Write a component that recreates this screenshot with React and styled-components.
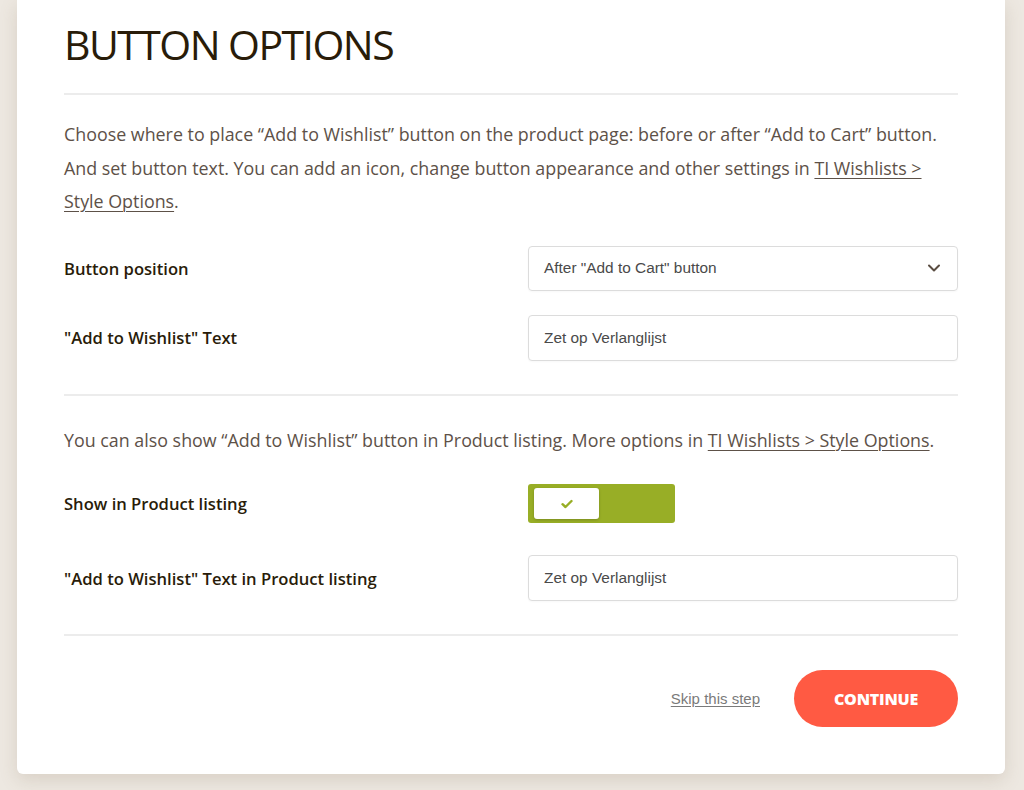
import React, { useState } from 'react';
import styled, { createGlobalStyle } from 'styled-components';

const GlobalStyle = createGlobalStyle`
  html, body {
    margin: 0;
    padding: 0;
    background: #ede8e1;
  }
  body {
    font-family: 'Open Sans', sans-serif;
  }
`;

const Page = styled.div`
  padding: 0 19px 17px 17px;
  min-height: 790px;
  box-sizing: border-box;
`;

const Card = styled.div`
  background: #fff;
  border-radius: 0 0 6px 6px;
  box-shadow: 0 6px 18px rgba(120, 100, 70, 0.18);
  padding: 20px 47px 47px;
`;

const Title = styled.h1`
  margin: 0;
  font-family: 'Open Sans', sans-serif;
  font-weight: 400;
  font-size: 41px;
  line-height: 48px;
  color: #291c09;
  letter-spacing: -1.55px;
`;

const Divider = styled.hr`
  border: 0;
  height: 2px;
  background: #ececec;
  margin: ${(p) => p.$margin || '25px 0 0'};
`;

const Text = styled.p`
  margin: ${(p) => p.$margin || '23px 0 0'};
  font-size: 17.85px;
  line-height: 33.5px;
  color: #5d5148;

  a {
    color: #5d5148;
    text-decoration: underline;
    text-underline-offset: 3px;
    text-decoration-thickness: 1px;
  }
`;

const Fields = styled.div`
  display: flex;
  flex-direction: column;
  gap: ${(p) => p.$gap || '24px'};
  margin-top: ${(p) => p.$top || '27px'};
`;

const Row = styled.div`
  display: grid;
  grid-template-columns: 1fr 430px;
  align-items: center;
`;

const Label = styled.label`
  font-size: 16.6px;
  font-weight: 600;
  color: #291c09;
`;

const SelectBox = styled.div`
  height: 45px;
  border: 1px solid #dcdcdc;
  border-radius: 4px;
  box-sizing: border-box;
  display: flex;
  align-items: center;
  justify-content: space-between;
  padding: 0 16px 0 15px;
  font-family: 'Liberation Sans', Arial, sans-serif;
  font-size: 15.4px;
  color: #4a4a4a;
  box-shadow: 0 1px 2px rgba(0, 0, 0, 0.03);
`;

const Input = styled.input`
  height: 46px;
  border: 1px solid #dcdcdc;
  border-radius: 4px;
  box-sizing: border-box;
  padding: 0 15px;
  font-family: 'Liberation Sans', Arial, sans-serif;
  font-size: 15.4px;
  color: #4a4a4a;
  outline: none;
  width: 100%;
  box-shadow: 0 1px 2px rgba(0, 0, 0, 0.03);
`;

const Toggle = styled.button`
  width: 147px;
  height: 39px;
  border: 0;
  border-radius: 3px;
  background: #98ae26;
  padding: 4px 6px;
  box-sizing: border-box;
  display: flex;
  justify-content: ${(p) => (p.$on ? 'flex-start' : 'flex-end')};
  cursor: pointer;
`;

const Knob = styled.span`
  width: 65px;
  height: 31px;
  background: #fff;
  border-radius: 3px;
  box-shadow: 0 1px 3px rgba(0, 0, 0, 0.2);
  display: flex;
  align-items: center;
  justify-content: center;
`;

const Footer = styled.div`
  display: flex;
  justify-content: flex-end;
  align-items: center;
  gap: 34px;
  margin-top: 34px;
`;

const SkipLink = styled.a`
  font-family: 'Liberation Sans', Arial, sans-serif;
  font-size: 15px;
  color: #7a7a7a;
  text-decoration: underline;
  text-underline-offset: 2px;
`;

const ContinueButton = styled.button`
  width: 164px;
  height: 57px;
  border: 0;
  border-radius: 29px;
  background: #ff5a43;
  color: #fff;
  font-family: 'Open Sans', sans-serif;
  font-weight: 800;
  font-size: 16px;
  letter-spacing: -0.2px;
  text-transform: uppercase;
  cursor: pointer;
`;

const Chevron = () => (
  <svg width="14" height="14" viewBox="0 0 14 14" fill="none">
    <path d="M2 4.5 L7 9.5 L12 4.5" stroke="#5a4d42" strokeWidth="2" strokeLinecap="round" strokeLinejoin="round" />
  </svg>
);

const Check = () => (
  <svg width="12" height="10" viewBox="0 0 12 10" fill="none">
    <path d="M1.5 5.2 L4.5 8 L10.5 2" stroke="#98ae26" strokeWidth="2.4" strokeLinecap="round" strokeLinejoin="round" />
  </svg>
);

export default function App() {
  const [showListing, setShowListing] = useState(true);

  return (
    <>
      <GlobalStyle />
      <Page>
        <Card>
          <Title>BUTTON OPTIONS</Title>
          <Divider />
          <Text>
            Choose where to place “Add to Wishlist” button on the product page: before or after “Add to Cart” button.
            <br />
            And set button text. You can add an icon, change button appearance and other settings in{' '}
            <a href="#">TI Wishlists &gt; Style Options</a>.
          </Text>

          <Fields>
            <Row>
              <Label>Button position</Label>
              <SelectBox>
                <span>After "Add to Cart" button</span>
                <Chevron />
              </SelectBox>
            </Row>
            <Row>
              <Label>"Add to Wishlist" Text</Label>
              <Input defaultValue="Zet op Verlanglijst" />
            </Row>
          </Fields>

          <Divider $margin="33px 0 0" />
          <Text $margin="28px 0 0">
            You can also show “Add to Wishlist” button in Product listing. More options in{' '}
            <a href="#">TI Wishlists &gt; Style Options</a>.
          </Text>

          <Fields $gap="32px" $top="27px">
            <Row>
              <Label>Show in Product listing</Label>
              <Toggle $on={showListing} onClick={() => setShowListing(!showListing)}>
                <Knob>{showListing && <Check />}</Knob>
              </Toggle>
            </Row>
            <Row>
              <Label>"Add to Wishlist" Text in Product listing</Label>
              <Input defaultValue="Zet op Verlanglijst" />
            </Row>
          </Fields>

          <Divider $margin="33px 0 0" />
          <Footer>
            <SkipLink href="#">Skip this step</SkipLink>
            <ContinueButton>Continue</ContinueButton>
          </Footer>
        </Card>
      </Page>
    </>
  );
}
